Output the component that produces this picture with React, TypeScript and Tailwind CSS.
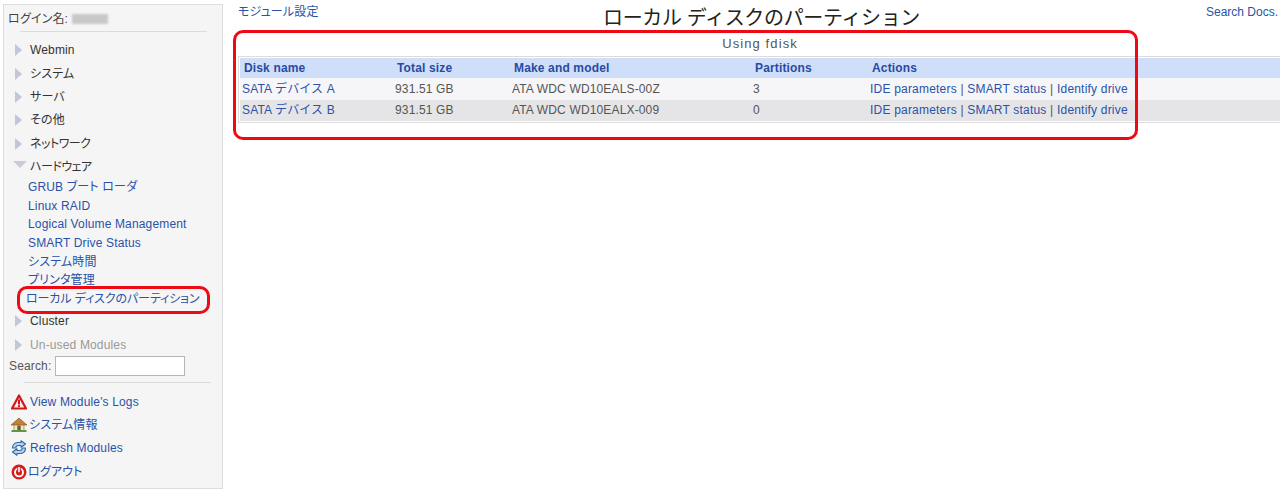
const font = "font-['Liberation_Sans','Noto_Sans_CJK_JP',sans-serif]";

const closedMenus = [
  { label: "Webmin", h: "h-[24px]" },
  { label: "システム", h: "h-[23.4px]" },
  { label: "サーバ", h: "h-[23.4px]" },
  { label: "その他", h: "h-[23.4px]" },
  { label: "ネットワーク", h: "h-[23.4px]", tight: true },
];
const hardwareLinks = [
  "GRUB ブート ローダ",
  "Linux RAID",
  "Logical Volume Management",
  "SMART Drive Status",
  "システム時間",
  "プリンタ管理",
];
const disks = [
  { name: "SATA デバイス A", size: "931.51 GB", model: "ATA WDC WD10EALS-00Z", parts: "3", bg: "bg-[#f6f6f8]" },
  { name: "SATA デバイス B", size: "931.51 GB", model: "ATA WDC WD10EALX-009", parts: "0", bg: "bg-[#e5e5e7]" },
];

function Arrow({ open }: { open?: boolean }) {
  return (
    <svg width="14" height="14" viewBox="0 0 14 14" className="shrink-0">
      {open ? (
        <polygon points="0,1 14,1 7,8" fill="#c9cbdb" />
      ) : (
        <polygon points="2,1 9,7 2,13" fill="#c3c6d8" />
      )}
    </svg>
  );
}

function MenuRow({ label, h, open, dim, tight }: { label: string; h: string; open?: boolean; dim?: boolean; tight?: boolean }) {
  return (
    <div className={`flex items-center gap-[3px] pl-[9px] ${h} ${dim ? "text-[#999]" : "text-[#333]"}`}>
      <Arrow open={open} />
      <span className={`whitespace-nowrap ${tight ? "tracking-[-0.5px]" : ""}`}>{label}</span>
    </div>
  );
}

function WarnIcon() {
  return (
    <svg width="16" height="16" viewBox="0 0 16 16" className="shrink-0">
      <polygon points="8,1.5 15,14.5 1,14.5" fill="#fbe9e9" stroke="#d01818" strokeWidth="2.2" strokeLinejoin="round" />
      <rect x="7" y="5.5" width="2" height="5" fill="#d01818" />
      <rect x="7" y="11.2" width="2" height="1.8" fill="#d01818" />
    </svg>
  );
}

function HomeIcon() {
  return (
    <svg width="16" height="16" viewBox="0 0 16 16" className="shrink-0">
      <rect x="3" y="7" width="10" height="6.500" fill="#efe6cc" stroke="#9a7a3a" strokeWidth="0.7" />
      <polygon points="8,1 16,8 0,8" fill="#c08238" stroke="#7d4e1c" strokeWidth="0.6" />
      <rect x="6.300" y="8.500" width="3.400" height="5" fill="#6f5a3a" />
      <rect x="0.500" y="13" width="15" height="2" fill="#5d9a3c" />
    </svg>
  );
}

function RefreshIcon() {
  return (
    <svg width="16" height="16" viewBox="0 0 16 16" className="shrink-0" fill="none">
      <path d="M1.500 8C1.500 4.200 4.200 2.500 7.500 2.500H10V.8l4.500 3.200L10 7.200V5.500H7.500C6 5.500 4.800 6.500 4.800 8z" fill="#b9d3ee" stroke="#2f66a8" strokeWidth="1.100" strokeLinejoin="round" />
      <path d="M14.500 8c0 3.800-2.700 5.500-6 5.500H6v1.700L1.500 12 6 8.800v1.700h2.500c1.500 0 2.700-1 2.700-2.500z" fill="#b9d3ee" stroke="#2f66a8" strokeWidth="1.100" strokeLinejoin="round" />
    </svg>
  );
}

function PowerIcon() {
  return (
    <svg width="16" height="16" viewBox="0 0 16 16" className="shrink-0" fill="none">
      <circle cx="8" cy="8" r="7.500" fill="#d81c1c" />
      <circle cx="8" cy="8.400" r="4" stroke="#fff" strokeWidth="1.900" />
      <rect x="6.300" y="2.800" width="3.400" height="5.500" fill="#d81c1c" />
      <rect x="7.200" y="3" width="1.600" height="5.200" fill="#fff" />
    </svg>
  );
}

const bottomLinks = [
  { label: "View Module's Logs", icon: <WarnIcon />, gap: "gap-[3px]", h: "h-[22px]" },
  { label: "システム情報", icon: <HomeIcon />, gap: "gap-[2px]", h: "h-[23.5px]" },
  { label: "Refresh Modules", icon: <RefreshIcon />, gap: "gap-[3px]", h: "h-[24px]" },
  { label: "ログアウト", icon: <PowerIcon />, gap: "gap-[1px]", h: "h-[23.5px]" },
];

function Sidebar() {
  return (
    <aside className="ml-[3px] mt-[4px] flex h-[485px] w-[220px] shrink-0 flex-col border border-[#dddddd] bg-[#f5f5f5] text-[12px]">
      <div className="flex h-[26px] items-center pl-[4px] pt-[1px] text-[#444]">
        ログイン名:
        <span className="ml-[4px] h-[10px] w-[36px] bg-[#c8c8c8] blur-[1px]" />
      </div>
      <div className="ml-[16px] mr-[15px] h-px bg-[#dcdcdc]" />
      <div className="h-[6px]" />
      {closedMenus.map((m) => (
        <MenuRow key={m.label} label={m.label} h={m.h} tight={m.tight} />
      ))}
      <MenuRow label="ハードウェア" h="h-[22.4px]" open tight />
      <div className="flex flex-col pl-[24px] text-[#2a52a8]">
        {hardwareLinks.map((l) => (
          <a key={l} className="flex h-[18.6px] items-center whitespace-nowrap">
            {l}
          </a>
        ))}
        <a className="-ml-[2px] flex h-[18.6px] items-center whitespace-nowrap tracking-[-0.1px]">
          ローカル ディスクのパーティション
        </a>
      </div>
      <MenuRow label="Cluster" h="h-[26.7px]" />
      <MenuRow label="Un-used Modules" h="h-[21.1px]" dim />
      <div className="flex h-[20px] items-center pl-[5px] text-[#555]">
        Search:
        <input className="ml-[4px] h-[20px] w-[130px] border border-[#b5b5b5] bg-white" />
      </div>
      <div className="ml-[20px] mr-[11px] mt-[6px] h-px bg-[#dcdcdc]" />
      <div className="mt-[8px] flex flex-col pl-[7px] text-[#2a52a8]">
        {bottomLinks.map((b) => (
          <a key={b.label} className={`flex items-center whitespace-nowrap ${b.gap} ${b.h}`}>
            {b.icon}
            {b.label}
          </a>
        ))}
      </div>
    </aside>
  );
}

function ActionLinks() {
  return (
    <span className="whitespace-nowrap tracking-[0.2px] text-[#555]">
      <a className="text-[#2a52a8]">IDE parameters</a> | <a className="text-[#2a52a8]">SMART status</a> |{" "}
      <a className="text-[#2a52a8]">Identify drive</a>
    </span>
  );
}

function Main() {
  return (
    <main className="relative -mr-[2px] ml-[15px] flex-1">
      <div className="relative h-[32px]">
        <div className="flex justify-between pr-[4px] pt-[3px]">
          <a className="text-[#2a52a8]">モジュール設定</a>
          <a className="tracking-normal text-[#2a52a8]">Search Docs.</a>
        </div>
        <h1 className="absolute left-[365px] top-[6px] whitespace-nowrap text-[20px] leading-[24px] tracking-[-0.35px] text-[#222] [font-feature-settings:normal]">
          ローカル ディスクのパーティション
        </h1>
      </div>
      <div className="flex h-[24px] items-center justify-center text-[13px] tracking-[1.1px] text-[#555]">Using fdisk</div>
      <div className="border border-[#dcdcdc] p-px">
        <div className="flex h-[20px] items-center bg-[#cfdffa] font-bold text-[#2a4aa0]">
          <div className="w-[155px] pl-[4px]">Disk name</div>
          <div className="w-[116px] pl-[2px]">Total size</div>
          <div className="w-[242px] pl-[3px]">Make and model</div>
          <div className="w-[117px] pl-[2px]">Partitions</div>
          <div className="pl-[2px]">Actions</div>
        </div>
        {disks.map((d) => (
          <div key={d.name} className={`flex h-[21.5px] items-center text-[#555] ${d.bg}`}>
            <a className="w-[155px] pl-[2px] text-[#2a52a8] [font-feature-settings:normal]">{d.name}</a>
            <div className="w-[116px]">{d.size}</div>
            <div className="w-[242px] pl-[1px]">{d.model}</div>
            <div className="w-[117px]">{d.parts}</div>
            <ActionLinks />
          </div>
        ))}
      </div>
    </main>
  );
}

export default function App() {
  return (
    <div className={`relative flex h-[493px] w-[1280px] overflow-hidden bg-white text-[12px] tracking-[0.15px] [font-feature-settings:'palt'] ${font}`}>
      <Sidebar />
      <Main />
      {/* red annotation outlines drawn over the page */}
      <div className="absolute left-[233px] top-[30px] h-[110px] w-[905px] rounded-[10px] border-[3px] border-[#ee0a14]" />
      <div className="absolute left-[17px] top-[286px] h-[28px] w-[193px] rounded-[10px] border-[3px] border-[#ee0a14]" />
    </div>
  );
}
